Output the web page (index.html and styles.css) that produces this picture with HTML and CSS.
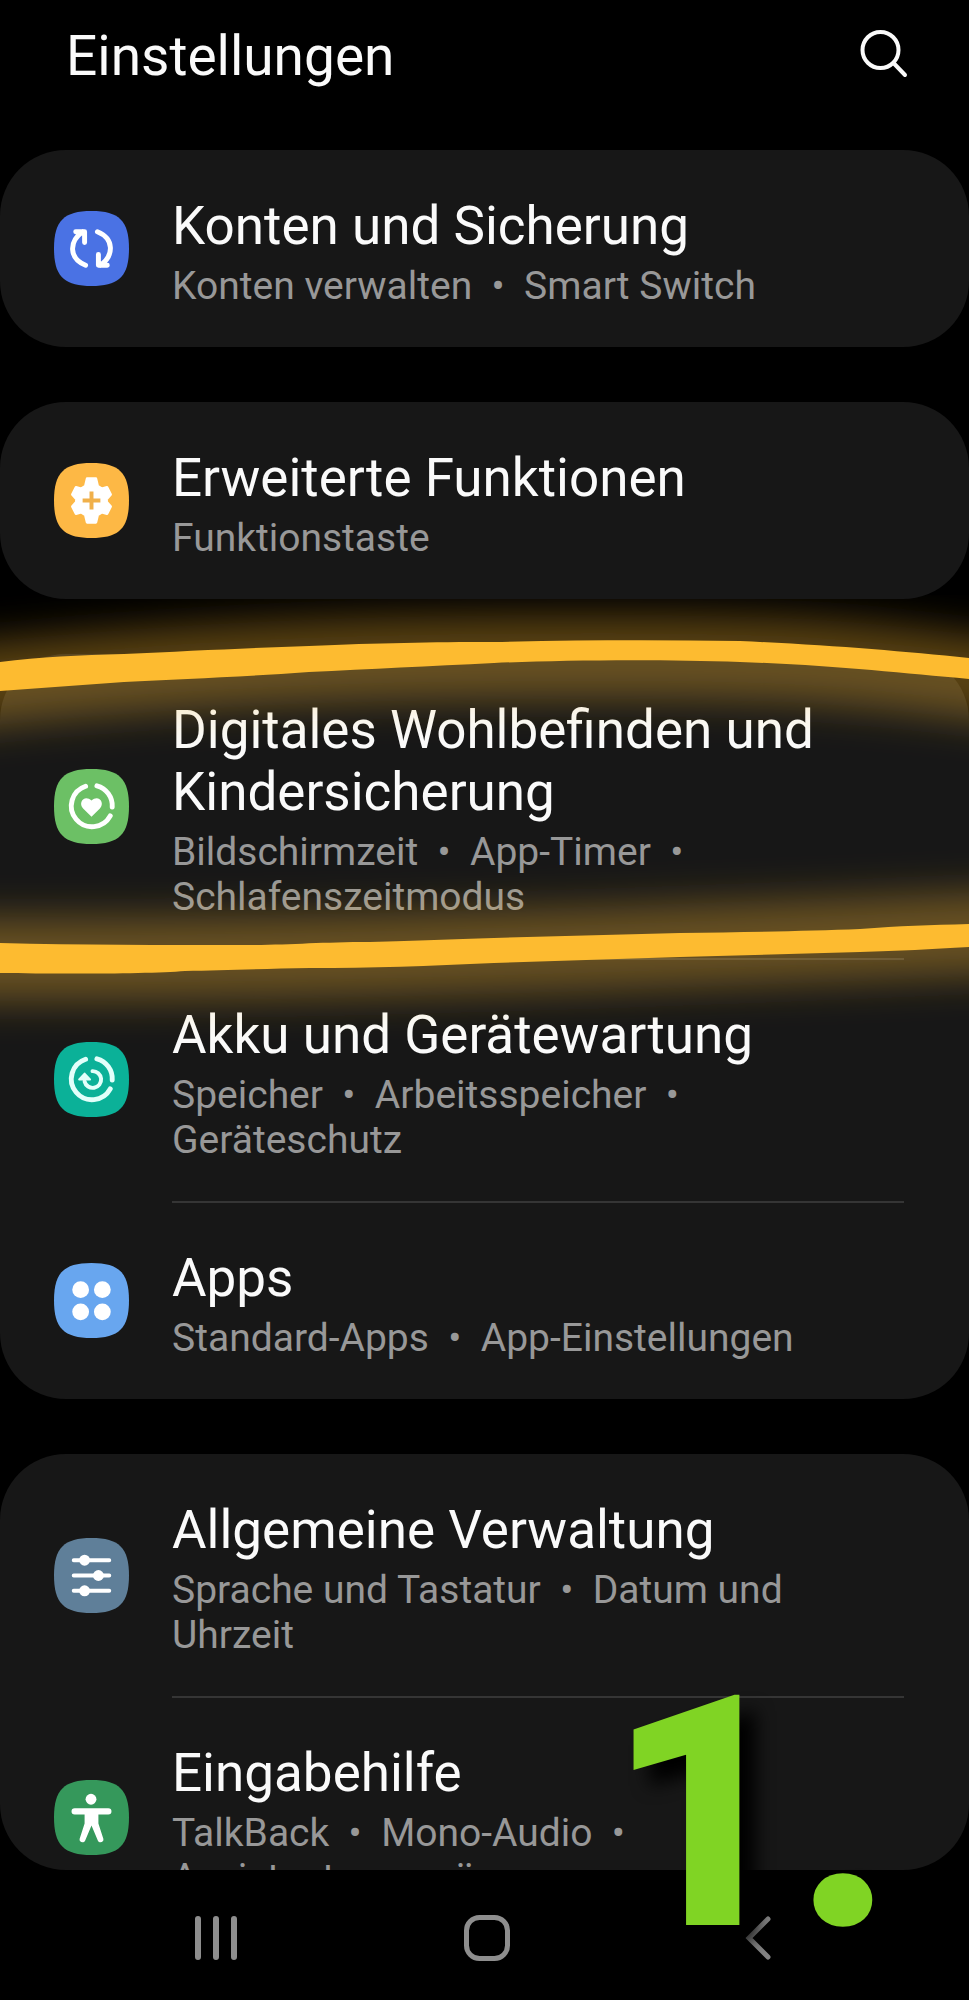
FILE: index.html
```html
<!DOCTYPE html>
<html lang="de">
<head>
<meta charset="utf-8">
<meta name="viewport" content="width=device-width, initial-scale=1">
<title>Einstellungen</title>
<link rel="stylesheet" href="styles.css">
</head>
<body>
<header class="header">
  <h1 class="header-title">Einstellungen</h1>
  <button class="icon-button" type="button" aria-label="Suchen">
    <svg width="50" height="54" viewBox="0 0 50 54" fill="none" stroke="#fafafa" stroke-width="4" stroke-linecap="round"><circle cx="21.500" cy="21" r="18"/><path d="M34.500 34 46 46"/></svg>
  </button>
</header>

<main class="list">
  <section class="card">
    <a class="row" href="#konten">
      <svg class="icon" viewBox="0 0 76 76"><path fill="#4a72e4" d="M38 0C66 0 76 10 76 38S66 76 38 76 0 66 0 38 10 0 38 0Z"/><g fill="none" stroke="#fff" stroke-width="5" stroke-linecap="round" stroke-linejoin="round"><path d="M32 55C15 48 15 31 29 21M22 21h9v11"/><path d="M44 21C61 28 61 45 47 55M54 55h-9V44"/></g></svg>
      <span class="text"><span class="title">Konten und Sicherung</span><span class="sub">Konten verwalten&nbsp; •&nbsp; Smart Switch</span></span>
    </a>
  </section>

  <section class="card card-front">
    <a class="row" href="#funktionen">
      <svg class="icon" viewBox="0 0 76 76"><path fill="#fdb845" d="M38 0C66 0 76 10 76 38S66 76 38 76 0 66 0 38 10 0 38 0Z"/><path fill="#fff" stroke="#fff" stroke-width="3" stroke-linejoin="round" transform="translate(38 38) scale(.9 1.02) translate(-38 -38.500)" d="M33 17h10l2 7.500 4.500 2.500 6-1.500 4 7-4.500 4.500v3l4.500 4.500-4 7-6-1.500-4.500 2.500-2 7.500h-10l-2-7.500-4.500-2.500-6 1.500-4-7 4.500-4.500v-3L16.500 32.500l4-7 6 1.500 4.500-2.500Z"/><path stroke="#f0b04a" stroke-width="4" d="M38 29v18M29 38h18"/></svg>
      <span class="text"><span class="title">Erweiterte Funktionen</span><span class="sub">Funktionstaste</span></span>
    </a>
  </section>

  <div class="marked">
    <section class="card">
      <a class="row" href="#wohlbefinden">
        <svg class="icon" viewBox="0 0 76 76"><path fill="#6cc065" d="M38 0C66 0 76 10 76 38S66 76 38 76 0 66 0 38 10 0 38 0Z"/><g fill="none" stroke="#fff" stroke-width="5" stroke-linecap="round"><path d="M32 17.500A21 21 0 1 0 57 47.500"/><path d="M43.500 17A21 21 0 0 1 59 38.500"/></g><path fill="#fff" d="M38 48.500 29.500 40C24 34 31 25.500 38 32c7-6.500 14 2 8.500 8Z"/></svg>
        <span class="text"><span class="title">Digitales Wohlbefinden und Kindersicherung</span><span class="sub">Bildschirmzeit&nbsp; •&nbsp; App-Timer&nbsp; • Schlafenszeitmodus</span></span>
      </a>
      <a class="row" href="#akku">
        <svg class="icon" viewBox="0 0 76 76"><path fill="#0bb198" d="M38 0C66 0 76 10 76 38S66 76 38 76 0 66 0 38 10 0 38 0Z"/><g fill="none" stroke="#e2fffa" stroke-width="5" stroke-linecap="round"><path d="M32 17.500A21 21 0 1 0 57 47.500"/><path d="M43.500 17A21 21 0 0 1 59 38.500"/><path stroke-width="4" d="M39 29.500A8.500 8.500 0 1 1 31 40"/></g><path fill="#e2fffa" stroke="#e2fffa" stroke-width="2" stroke-linejoin="round" d="M25.500 38 31 32l5.500 6Z"/></svg>
        <span class="text"><span class="title">Akku und Gerätewartung</span><span class="sub">Speicher&nbsp; •&nbsp; Arbeitsspeicher&nbsp; • Geräteschutz</span></span>
      </a>
      <a class="row" href="#apps">
        <svg class="icon" viewBox="0 0 76 76"><path fill="#68a6ef" d="M38 0C66 0 76 10 76 38S66 76 38 76 0 66 0 38 10 0 38 0Z"/><g fill="#fff"><circle cx="27" cy="27" r="8.500"/><circle cx="49" cy="27" r="8.500"/><circle cx="27" cy="49.500" r="8.500"/><circle cx="49" cy="49.500" r="8.500"/></g></svg>
        <span class="text"><span class="title">Apps</span><span class="sub">Standard-Apps&nbsp; •&nbsp; App-Einstellungen</span></span>
      </a>
    </section>
    <svg class="marker" viewBox="0 0 969 460" preserveAspectRatio="none" aria-hidden="true">
      <defs><filter id="glow" filterUnits="userSpaceOnUse" x="-100" y="-60" width="1169" height="580"><feGaussianBlur stdDeviation="19"/></filter></defs>
      <g filter="url(#glow)" fill="none" stroke="#fdbb30" stroke-opacity="0.350" stroke-width="84">
        <path d="M-80 96C200 65 400 62 600 62S860 67 1050 92"/>
        <path d="M-80 364C200 366 500 360 1050 336"/>
      </g>
      <g fill="#fdbb30">
        <path d="M0 67C40 62 80 60 124 59 190 56 250 53 309 51 380 48 430 47 494 47 580 45 660 45 740 46 830 50 900 56 969 63V84C900 78 830 70 740 67 660 64 560 65 494 68 430 71 370 74 309 77 240 82 180 84 124 87L0 96Z"/>
        <path d="M0 348C80 350 160 350 247 350 290 350 320 347 370 347 420 346 450 344 494 343L680 338C750 337 810 336 860 334 900 331 930 330 969 329V352C930 354 900 356 860 357L680 362 494 368C430 371 370 373 310 373 260 374 220 375 185 376 150 379 60 379 0 378Z"/>
      </g>
    </svg>
  </div>

  <section class="card card-last">
    <a class="row" href="#verwaltung">
      <svg class="icon" viewBox="0 0 76 76"><path fill="#5f7f99" d="M38 0C66 0 76 10 76 38S66 76 38 76 0 66 0 38 10 0 38 0Z"/><path stroke="#fff" stroke-width="4" stroke-linecap="round" d="M20 22.500h36M20 38h36M20 53.500h36"/><g fill="#fff"><circle cx="31" cy="22.500" r="5.500"/><circle cx="45" cy="38" r="5.500"/><circle cx="31" cy="53.500" r="5.500"/></g></svg>
      <span class="text"><span class="title">Allgemeine Verwaltung</span><span class="sub">Sprache und Tastatur&nbsp; •&nbsp; Datum und Uhrzeit</span></span>
    </a>
    <a class="row" href="#eingabehilfe">
      <svg class="icon" viewBox="0 0 76 76"><path fill="#35985b" d="M38 0C66 0 76 10 76 38S66 76 38 76 0 66 0 38 10 0 38 0Z"/><circle cx="37.500" cy="19.500" r="5.500" fill="#fff"/><path fill="#fff" d="M21 28.500h34a3 3 0 0 1 0 6.500H45v9l5 15.500c1 3.500-4 5-5.500 2L38 46l-6.500 15.500c-1.500 3-6.500 1.500-5.500-2L31 44v-9H21a3 3 0 0 1 0-6.500Z"/></svg>
      <span class="text"><span class="title">Eingabehilfe</span><span class="sub">TalkBack&nbsp; •&nbsp; Mono-Audio&nbsp; •<br>Assistentenmenü</span></span>
    </a>
  </section>
</main>

<nav class="navbar" aria-label="Navigation">
  <button class="icon-button" type="button" aria-label="Letzte Apps"><svg width="48" height="48" viewBox="0 0 48 48" stroke="#8e8e8e" stroke-width="6" stroke-linecap="round"><path d="M6 5v38M24 5v38M42 5v38"/></svg></button>
  <button class="icon-button" type="button" aria-label="Startseite"><svg width="48" height="48" viewBox="0 0 48 48" fill="none" stroke="#8e8e8e" stroke-width="5"><rect x="3.500" y="3.500" width="41" height="41" rx="13"/></svg></button>
  <button class="icon-button" type="button" aria-label="Zurück"><svg width="48" height="48" viewBox="0 0 48 48" fill="none" stroke="#848484" stroke-width="5" stroke-linecap="round"><path d="M33 5 14 24l19 19"/></svg></button>
</nav>
<div class="step">1.</div>
</body>
</html>
```

FILE: styles.css
```css
* {
  box-sizing: border-box;
}

body {
  display: flex;
  flex-direction: column;
  position: relative;
  height: 100vh;
  margin: 0;
  overflow: hidden;
  background: #000;
  color: #fafafa;
  font-family: Roboto, "Liberation Sans", sans-serif;
}

.header {
  display: flex;
  justify-content: space-between;
  align-items: center;
  padding: 22px 60px 60px 66px;
}

.header-title {
  margin: 0;
  font-size: 55px;
  font-weight: 400;
  line-height: 68px;
}

.icon-button {
  display: flex;
  padding: 0;
  border: 0;
  background: none;
}

.list {
  display: flex;
  flex: 1;
  flex-direction: column;
  gap: 55px;
  min-height: 0;
}

.card {
  border-radius: 66px;
  background: #171717;
}

.card-front {
  position: relative;
  z-index: 2;
}

.card-last {
  flex: 1;
  min-height: 0;
  overflow: hidden;
}

.row {
  display: flex;
  align-items: center;
  gap: 43px;
  padding: 0 65px 0 54px;
  color: inherit;
  text-decoration: none;
}

.icon {
  flex: none;
  width: 75px;
  height: 75px;
}

.text {
  display: flex;
  flex: 1;
  flex-direction: column;
  gap: 7px;
  padding: 45px 0 38px;
}

.row + .row .text {
  padding-top: 44px;
  border-top: 2px solid #353535;
}

.title {
  font-size: 53px;
  line-height: 62px;
}

.sub {
  padding-right: 40px;
  color: #989898;
  font-size: 39px;
  line-height: 45px;
}

.marked {
  position: relative;
}

.marker {
  position: absolute;
  top: -59px;
  left: 0;
  width: 100%;
  height: 460px;
  pointer-events: none;
}

.navbar {
  display: grid;
  grid-template-columns: repeat(3, 1fr);
  place-items: center;
  height: 130px;
  padding: 6px 74px 0 80px;
}

.step {
  position: absolute;
  right: 76px;
  bottom: -4px;
  color: #80d424;
  font-size: 324px;
  font-weight: 900;
  line-height: 380px;
  text-shadow: 16px 16px 18px #000;
  pointer-events: none;
}
```
